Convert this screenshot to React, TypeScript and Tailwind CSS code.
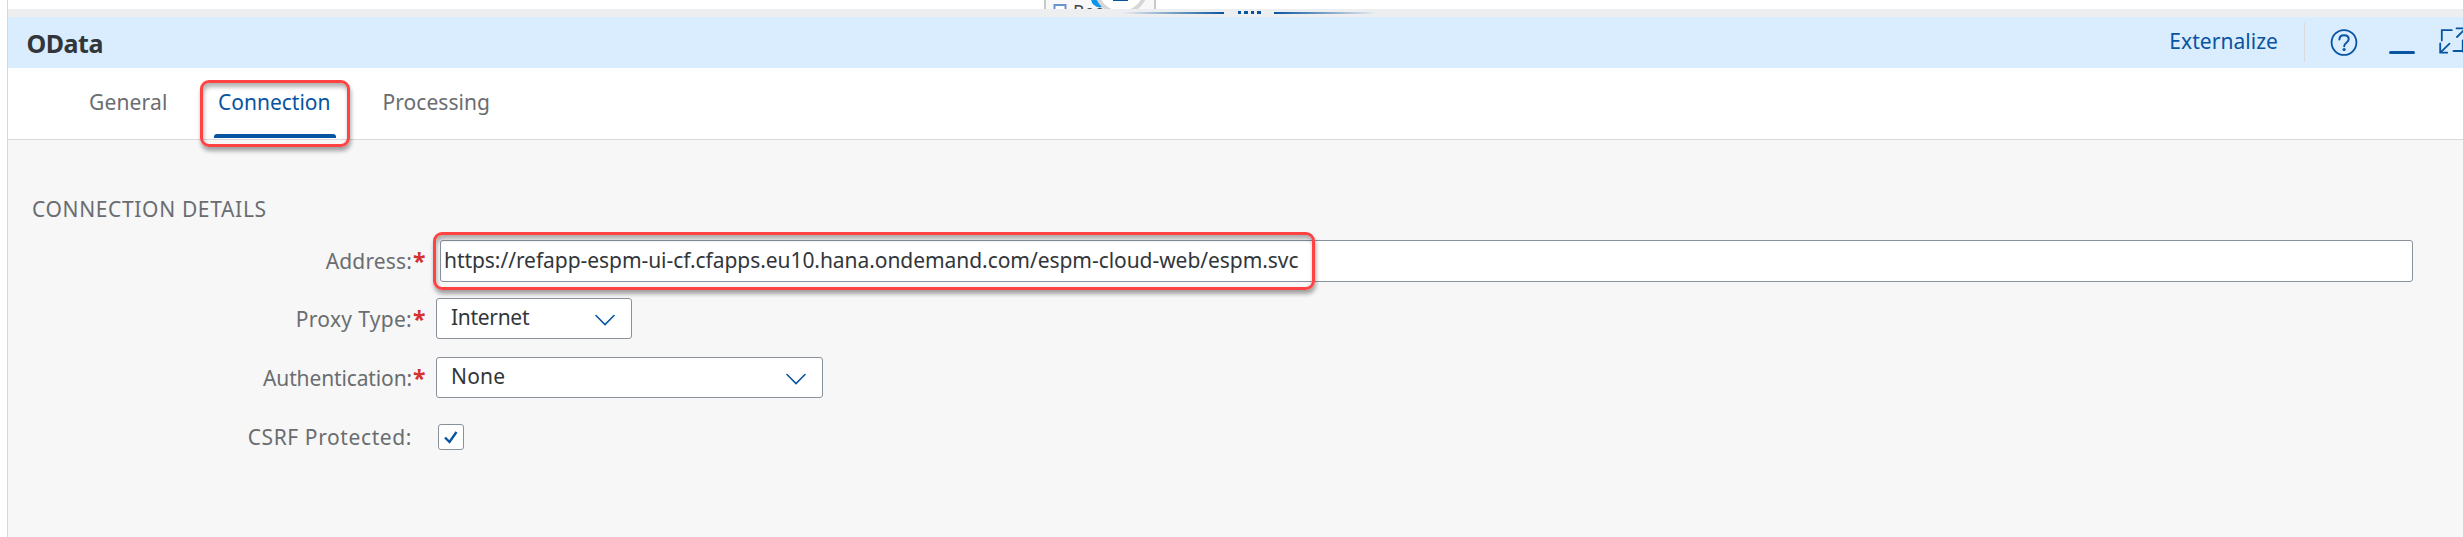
import type { ReactNode } from 'react';

function Splitter() {
  return (
    <div className="flex h-2 justify-center bg-[#eceeef] pt-[2px] pl-[27px]">
      <div className="flex w-[254px] justify-between">
        <div className="mt-px h-[2px] w-[102px] bg-linear-to-r from-transparent to-[#0854a0]" />
        <div className="flex gap-[3px]">
          <i className="h-[3px] w-[3.5px] bg-[#0854a0]" />
          <i className="h-[3px] w-[3.5px] bg-[#0854a0]" />
          <i className="h-[3px] w-[3.5px] bg-[#0854a0]" />
          <i className="h-[3px] w-[3.5px] bg-[#0854a0]" />
        </div>
        <div className="mt-px h-[2px] w-[102px] bg-linear-to-l from-transparent to-[#0854a0]" />
      </div>
    </div>
  );
}

function CanvasEdge() {
  return (
    <div className="h-[9px] overflow-hidden bg-white pl-[1036px]">
      <svg width="120" height="9" viewBox="0 0 120 9">
        <rect x="1" y="-20" width="110" height="50" fill="#f8f8f8" stroke="#c8c8c8" strokeWidth="2" />
        <rect x="10.5" y="5" width="11" height="9" fill="#fff" stroke="#6b93cf" strokeWidth="2" />
        <text x="29" y="18" fontFamily="Noto Sans, sans-serif" fontSize="18" fill="#444">Rec</text>
        <circle cx="56" cy="-1.5" r="9" fill="#0a96ee" />
        <circle cx="77" cy="-12" r="25" fill="#fff" stroke="#d6d6d6" strokeWidth="4" />
        <rect x="69" y="-2" width="15" height="3" fill="#0854a0" />
      </svg>
    </div>
  );
}

function Header() {
  return (
    <header className="flex h-[51px] items-center overflow-hidden bg-[#d9edff] pl-[18.5px] text-[#0854a0]">
      <h1 className="text-[25px] leading-8 font-bold tracking-[-0.5px] text-[#32363a]">OData</h1>
      <span className="mr-[26px] ml-auto pb-1 tracking-[0.05px]">Externalize</span>
      <div className="h-[39px] w-px bg-[#d9d9d9]" />
      <svg className="shrink-0" width="158" height="51" viewBox="2305 17 158 51" fill="none" stroke="#0854a0" strokeWidth="1.8" strokeLinecap="round">
        <circle cx="2344" cy="42.5" r="12.4" />
        <path d="M2339.4 39.6c0-2.8 1.9-4.4 4.7-4.4s4.6 1.7 4.6 4.1c0 3.6-4.5 3.4-4.5 7" strokeWidth="2" />
        <circle cx="2344.1" cy="49.5" r="1.6" fill="#0854a0" stroke="none" />
        <path d="M2390.5 52.5h23" strokeWidth="3" />
        <path d="M2441.8 40.5V30.2h10M2440.2 43.5v9.2h7M2440.6 52.3l8.9-8.6M2453.5 51h11M2462.7 40.5v11M2456.5 28.3h9M2457 37l8.5-8.5" />
      </svg>
    </header>
  );
}

function Tabs() {
  return (
    <nav className="flex h-[72px] items-stretch border-b border-[#d9d9d9] bg-white pl-[80px] leading-[68px] text-[#6a6d70]">
      <span className="w-[126px] pl-px tracking-[0.15px]">General</span>
      <span className="relative w-[167px] pl-[4px] text-[#0854a0]">
        Connection
        <i className="absolute top-[66px] left-0 h-1 w-[122px] rounded-t-[3px] bg-[#0854a0]" />
        <i className="absolute top-3 -left-[14px] h-[67px] w-[150px] rounded-[9px] border-3 border-[#ff4343] shadow-[1px_4px_4px_rgba(0,0,0,0.35),inset_1px_4px_4px_rgba(0,0,0,0.3)]" />
      </span>
      <span className="pl-[1.5px] tracking-[0.05px]">Processing</span>
    </nav>
  );
}

function Row({ label, required, children, className }: { label: ReactNode; required?: boolean; children: ReactNode; className: string }) {
  return (
    <div className={`flex items-center ${className}`}>
      <div className="flex w-[420px] shrink-0 pr-[3px]">
        <div className="flex-1 text-right text-[#6a6d70]">{label}</div>
        <b className="w-[13px] pl-px text-[23px] text-[#d3322f]">{required ? '*' : ''}</b>
      </div>
      {children}
    </div>
  );
}

function Select({ children, className }: { children: ReactNode; className: string }) {
  return (
    <div className={`ml-2 flex h-[41px] items-center justify-between rounded-[3px] border border-[#89919a] bg-white pr-4 pl-[14px] text-[#32363a] ${className}`}>
      <span className="pb-[3px]">{children}</span>
      <svg width="20" height="12" viewBox="0 0 20 12" className="mt-[3px]" fill="none" stroke="#0854a0" strokeWidth="1.6" strokeLinecap="round">
        <path d="M1 1.5l9 9 9-9" />
      </svg>
    </div>
  );
}

export default function App() {
  return (
    <div className="flex h-[537px] w-[2463px] overflow-hidden bg-white pl-[7px] font-['Noto_Sans',sans-serif] text-[21px] leading-[28px]">
      <div className="flex min-w-0 flex-1 flex-col border-l border-[#d9d9d9]">
        <CanvasEdge />
        <Splitter />
        <Header />
        <Tabs />
        <main className="flex-1 bg-[#f7f7f7]">
          <h2 className="mt-[55px] ml-[24px] h-[28px] w-[260px] tracking-[0.65px] whitespace-nowrap text-[#6a6d70]">CONNECTION DETAILS</h2>
          <Row className="mt-[17px] h-[42px]" required label={<span className="tracking-[0.15px]">Address:</span>}>
            <div className="relative ml-3 flex h-[42px] w-[1973px] items-center rounded-[3px] border border-[#89919a] bg-white pb-[3px] pl-[3px] text-[#32363a]">
              <span className="tracking-[-0.055px]">https://refapp-espm-ui-cf.cfapps.eu10.hana.ondemand.com/espm-cloud-web/espm.svc</span>
              <i className="absolute -top-[9px] -left-[8px] h-[58px] w-[882px] rounded-[9px] border-3 border-[#ff4343] shadow-[1px_4px_4px_rgba(0,0,0,0.35),inset_1px_4px_4px_rgba(0,0,0,0.3)]" />
            </div>
          </Row>
          <Row className="mt-[16px] h-[41px]" required label={<span className="tracking-[0.3px]">Proxy Type:</span>}>
            <Select className="w-[196px]"><span className="tracking-[-0.3px]">Internet</span></Select>
          </Row>
          <Row className="mt-[18px] h-[41px]" required label={<span className="tracking-[-0.13px]">Authentication:</span>}>
            <Select className="w-[387px]"><span className="tracking-[0.2px]">None</span></Select>
          </Row>
          <Row className="mt-[18px] h-[42px]" label={<span className="tracking-[0.6px]">CSRF Protected:</span>}>
            <div className="ml-[10px] flex h-[26px] w-[26px] items-center justify-center rounded-[3px] border border-[#89919a] bg-white">
              <svg width="14" height="13" viewBox="0 0 14 13" fill="none" stroke="#0854a0" strokeWidth="2.4">
                <path d="M1 6.5l4.5 4.5L12.5 1" />
              </svg>
            </div>
          </Row>
        </main>
      </div>
    </div>
  );
}
